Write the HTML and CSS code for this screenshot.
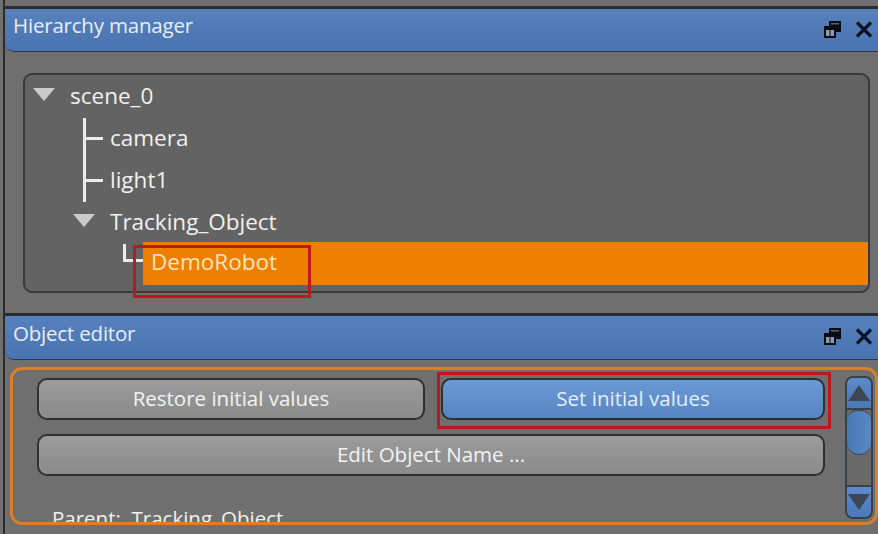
FILE: index.html
```html
<!DOCTYPE html>
<html lang="en">
<head>
    <meta charset="UTF-8">
    <title>Hierarchy manager</title>
    <link rel="stylesheet" href="styles.css">
</head>
<body>
    <div class="app">
        <!-- HIERARCHY MANAGER -->
        <div class="panel hierarchy">
            <div class="panel-header">
                <span class="panel-title">Hierarchy manager</span>
                <div class="header-icons">
                    <svg class="icon-restore" width="17" height="17" viewBox="0 0 17 17">
                        <rect x="5" y="0" width="12" height="11" fill="#0a0c14"/>
                        <rect x="7" y="2" width="8" height="1.5" fill="#55647a"/>
                        <rect x="0" y="5" width="12" height="12" fill="#0a0c14"/>
                        <rect x="2" y="9" width="8" height="6" fill="#8c9bb0"/>
                        <rect x="5.5" y="9" width="1" height="6" fill="#0a0c14"/>
                    </svg>
                    <svg class="icon-close" width="18" height="17" viewBox="0 0 18 17">
                        <path d="M2 1.5 L16 15.5 M16 1.5 L2 15.5" stroke="#0b1226" stroke-width="3.2"/>
                    </svg>
                </div>
            </div>
            <div class="panel-body">
                <div class="tree">
                    <div class="node">
                        <span class="slot"><svg class="arrow" width="22" height="13" viewBox="0 0 22 13"><polygon points="0,0 22,0 11,13" fill="#cacaca"/></svg></span>
                        <span class="label">scene_0</span>
                    </div>
                    <div class="node level-1">
                        <span class="slot branch"></span>
                        <span class="label">camera</span>
                    </div>
                    <div class="node level-1">
                        <span class="slot branch"></span>
                        <span class="label">light1</span>
                    </div>
                    <div class="node level-1">
                        <span class="slot"><svg class="arrow" width="22" height="13" viewBox="0 0 22 13"><polygon points="0,0 22,0 11,13" fill="#cacaca"/></svg></span>
                        <span class="label">Tracking_Object</span>
                    </div>
                    <div class="node level-2 selected">
                        <span class="slot branch last"></span>
                        <span class="label">DemoRobot</span>
                    </div>
                </div>
            </div>
        </div>

        <!-- OBJECT EDITOR -->
        <div class="panel editor">
            <div class="panel-header">
                <span class="panel-title">Object editor</span>
                <div class="header-icons">
                    <svg class="icon-restore" width="17" height="17" viewBox="0 0 17 17">
                        <rect x="5" y="0" width="12" height="11" fill="#0a0c14"/>
                        <rect x="7" y="2" width="8" height="1.5" fill="#55647a"/>
                        <rect x="0" y="5" width="12" height="12" fill="#0a0c14"/>
                        <rect x="2" y="9" width="8" height="6" fill="#8c9bb0"/>
                        <rect x="5.5" y="9" width="1" height="6" fill="#0a0c14"/>
                    </svg>
                    <svg class="icon-close" width="18" height="17" viewBox="0 0 18 17">
                        <path d="M2 1.5 L16 15.5 M16 1.5 L2 15.5" stroke="#0b1226" stroke-width="3.2"/>
                    </svg>
                </div>
            </div>
            <div class="editor-frame">
                <div class="editor-main">
                    <div class="button-grid">
                        <button class="btn">Restore initial values</button>
                        <button class="btn btn-blue marked">Set initial values</button>
                        <button class="btn wide">Edit Object Name ...</button>
                    </div>
                    <div class="parent-line">Parent:&nbsp; Tracking_Object</div>
                </div>
                <div class="scrollbar">
                    <div class="scroll-btn up"><svg width="22" height="16" viewBox="0 0 22 16"><polygon points="11,0 22,16 0,16" fill="#3d4756"/></svg></div>
                    <div class="scroll-thumb"></div>
                    <div class="scroll-track"></div>
                    <div class="scroll-btn down"><svg width="22" height="16" viewBox="0 0 22 16"><polygon points="0,0 22,0 11,16" fill="#3d4756"/></svg></div>
                </div>
            </div>
        </div>
    </div>
</body>
</html>
```

FILE: styles.css
```css
:root {
    --panel-bg: #6f6f6f;
    --tree-bg: #636363;
    --header-blue: #4e79b5;
    --dark-line: #2c2c2c;
    --text-light: #f1f1f1;
    --orange: #ef7f00;
    --mark-red: #c3161c;
}

* { box-sizing: border-box; margin: 0; padding: 0; }

body {
    font-family: 'Open Sans', 'DejaVu Sans', sans-serif;
    background-color: var(--panel-bg);
    color: var(--text-light);
    width: 878px;
    height: 534px;
    overflow: hidden;
}

.app {
    margin-left: 3px;
    border-left: 2px solid var(--dark-line);
    height: 100%;
    padding-top: 6px;
}

.panel { border-top: 3px solid var(--dark-line); }

.panel-header {
    height: 43px;
    background: linear-gradient(#5681bd, #4a74b0);
    border-bottom: 1px solid #2e3a4c;
    border-radius: 0 0 0 9px;
    display: flex;
    align-items: center;
    justify-content: space-between;
    padding: 0 5px 0 8px;
}

.panel-title {
    font-size: 20.5px;
    color: #e7eef7;
    letter-spacing: -0.2px;
    margin-top: -10px;
}

.header-icons { display: flex; align-items: center; gap: 14px; margin-top: -2px; }

/* --- tree --- */
.hierarchy .panel-body { padding: 21px 8px 20px 18px; }

.tree {
    height: 220px;
    background-color: var(--tree-bg);
    border: 2px solid #3a3a3a;
    border-radius: 9px;
    padding: 1px 0 0 8px;
}

.node {
    height: 42px;
    display: flex;
    align-items: center;
}
.node.level-1 { padding-left: 40px; }
.node.level-2 { padding-left: 80px; }

.slot {
    width: 37px;
    height: 100%;
    flex-shrink: 0;
    display: flex;
    align-items: center;
    position: relative;
}
.slot .arrow { margin-top: -6px; }

.branch::before, .branch::after {
    content: '';
    position: absolute;
    background-color: #ececec;
}
.branch::before { left: 10px; top: 0; width: 3px; height: 100%; }
.branch::after { left: 12px; top: 19px; width: 18px; height: 3px; }
.branch.last { width: 30px; }
.branch.last::before { height: 18px; }
.branch.last::after { top: 15px; width: 20px; }

.label {
    font-size: 22.5px;
    line-height: 30px;
    margin-top: -3px;
    color: var(--text-light);
    white-space: nowrap;
}

.selected .label {
    flex: 1;
    align-self: stretch;
    display: flex;
    align-items: center;
    margin: -2px 0 1px 0;
    padding: 0 0 3px 8px;
    background-color: var(--orange);
    color: #fbe6bd;
    position: relative;
}
.selected .label::after {
    content: '';
    position: absolute;
    left: -10px;
    top: 3px;
    width: 172px;
    height: 47px;
    border: 3px solid var(--mark-red);
}

/* --- object editor --- */
.editor .panel-header { height: 44px; }

.editor-frame {
    margin: 7px 0 0 5px;
    height: 158px;
    border: 3px solid #d8802a;
    border-radius: 12px;
    display: flex;
    overflow: hidden;
    padding-right: 2px;
}

.editor-main {
    flex: 1;
    padding: 8px 20px 0 24px;
}

.button-grid {
    display: grid;
    grid-template-columns: 388fr 384fr;
    gap: 14px 16px;
}

.btn {
    height: 42px;
    padding-bottom: 2px;
    background: linear-gradient(#9b9b9b, #8b8b8b);
    border: 2px solid #2f2f2f;
    border-radius: 10px;
    color: #f3f3f3;
    font-family: inherit;
    font-size: 20.5px;
}
.btn.wide { grid-column: 1 / span 2; }
.btn-blue {
    background: linear-gradient(#6a99d4, #5686c4);
    color: #e4eef9;
}
.marked { position: relative; }
.marked::after {
    content: '';
    position: absolute;
    left: -6px;
    top: -8px;
    right: -8px;
    bottom: -11px;
    border: 3px solid var(--mark-red);
}

.parent-line {
    margin-top: 29px;
    padding-left: 15px;
    font-size: 20.5px;
    line-height: 26px;
}

.scrollbar {
    width: 28px;
    height: 143px;
    margin-top: 6px;
    border: 2px solid #39404b;
    border-radius: 8px;
    background-color: #6a6a6a;
    display: flex;
    flex-direction: column;
    overflow: hidden;
}
.scroll-btn {
    height: 32px;
    background: linear-gradient(#5c8bcb, #4a78b8);
    display: flex;
    align-items: center;
    justify-content: center;
    flex-shrink: 0;
}
.scroll-btn.up { border-bottom: 2px solid #39404b; }
.scroll-btn.down { border-top: 2px solid #39404b; }
.scroll-thumb {
    height: 45px;
    background: linear-gradient(90deg, #4a76b4, #5a88c6);
    border-radius: 10px 10px 12px 12px;
    border-top: 1px solid #39404b;
    border-bottom: 1px solid #39404b;
    flex-shrink: 0;
}
.scroll-track { flex: 1; }
```
